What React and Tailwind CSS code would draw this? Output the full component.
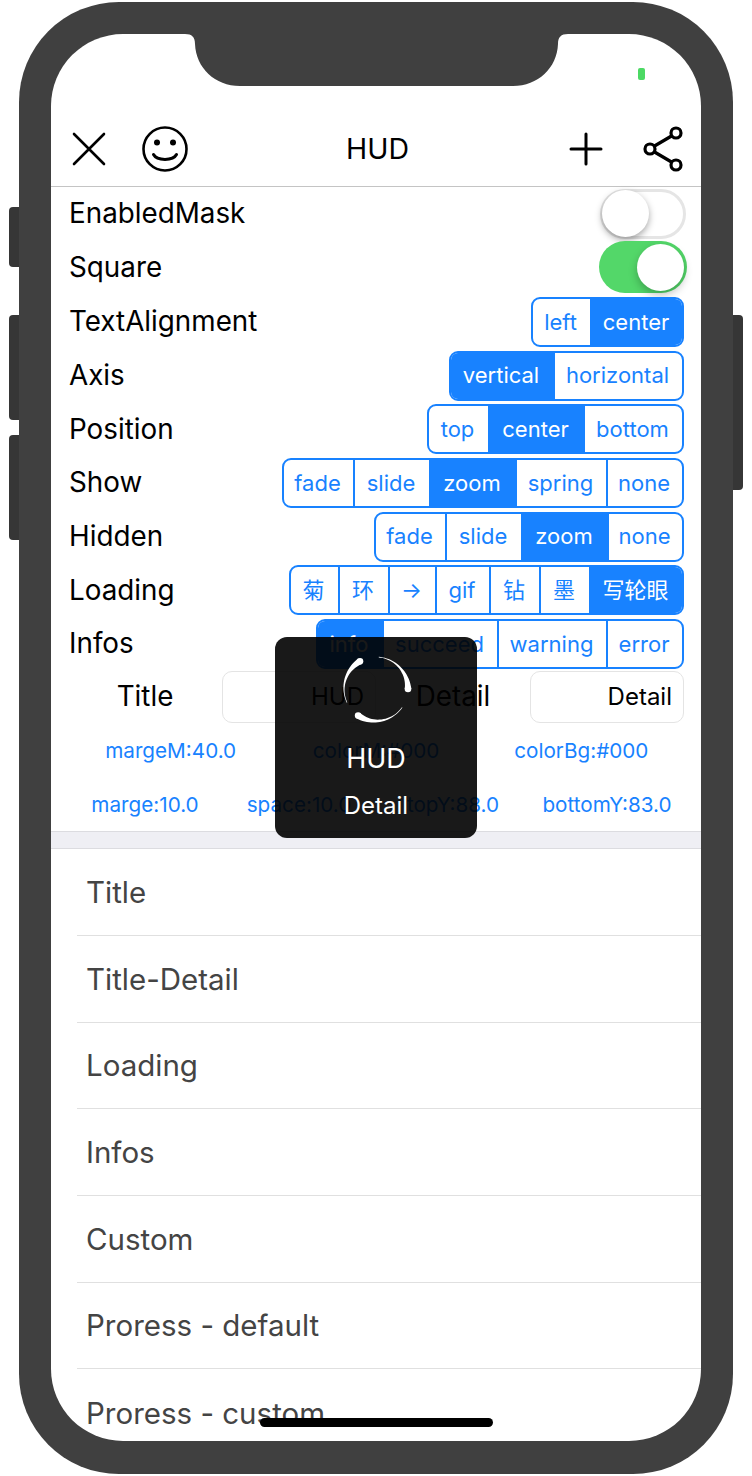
import React from "react";

const font = { fontFamily: "Inter, 'Noto Sans CJK SC', sans-serif" };

const segments = [
  {
    label: "TextAlignment",
    items: [
      ["left", "w-[57px]"],
      ["center", "w-[92px]", true],
    ],
  },
  {
    label: "Axis",
    items: [
      ["vertical", "w-[102px]", true],
      ["horizontal", "w-[129px]"],
    ],
  },
  {
    label: "Position",
    items: [
      ["top", "w-[59px]"],
      ["center", "w-[95px]", true],
      ["bottom", "w-[99px]"],
    ],
  },
  {
    label: "Show",
    items: [
      ["fade", "w-[69px]"],
      ["slide", "w-[76px]"],
      ["zoom", "w-[86px]", true],
      ["spring", "w-[91px]"],
      ["none", "w-[76px]"],
    ],
  },
  {
    label: "Hidden",
    items: [
      ["fade", "w-[69px]"],
      ["slide", "w-[76px]"],
      ["zoom", "w-[86px]", true],
      ["none", "w-[75px]"],
    ],
  },
  {
    label: "Loading",
    items: [
      ["菊", "w-[47px]"],
      ["环", "w-[50px]"],
      ["→", "w-[47px]"],
      ["gif", "w-[54px]"],
      ["钻", "w-[50px]"],
      ["墨", "w-[50px]"],
      ["写轮眼", "w-[93px]", true],
    ],
  },
  {
    label: "Infos",
    items: [
      ["info", "w-[64px]", true],
      ["succeed", "w-[115px]"],
      ["warning", "w-[109px]"],
      ["error", "w-[76px]"],
    ],
  },
];

const listItems = [
  "Title",
  "Title-Detail",
  "Loading",
  "Infos",
  "Custom",
  "Proress - default",
  "Proress - custom",
];

const Notch = () => (
  <svg width="383" height="52" viewBox="0 0 383 52" className="block">
    <path
      d="M0 0H383C376 0 373 3 373 10C372 34 353 52 328 52H55C30 52 11 34 10 10C10 3 7 0 0 0Z"
      fill="#404040"
    />
  </svg>
);

const CloseIcon = () => (
  <svg width="34" height="34" viewBox="0 0 34 34" fill="none" stroke="#000" strokeWidth="2.6" strokeLinecap="round">
    <path d="M2 2L32 32M32 2L2 32" />
  </svg>
);

const SmileIcon = () => (
  <svg width="46" height="46" viewBox="0 0 46 46" fill="none" stroke="#000" strokeWidth="2.6" strokeLinecap="round">
    <circle cx="23" cy="23" r="21.5" />
    <path d="M11.5 28.5C15 35 31 35 34.5 28.5" strokeWidth="3" />
    <circle cx="15" cy="16.5" r="3" fill="#000" stroke="none" />
    <circle cx="31" cy="16.5" r="3" fill="#000" stroke="none" />
  </svg>
);

const PlusIcon = () => (
  <svg width="34" height="34" viewBox="0 0 34 34" fill="none" stroke="#000" strokeWidth="3" strokeLinecap="round">
    <path d="M17 2V32M2 17H32" />
  </svg>
);

const ShareIcon = () => (
  <svg width="40" height="46" viewBox="0 0 40 46" fill="none" stroke="#000" strokeWidth="3.2">
    <circle cx="7" cy="23" r="5" />
    <circle cx="33" cy="7" r="5" />
    <circle cx="33" cy="39" r="5" />
    <path d="M11.5 20L28.5 10M11.5 26L28.5 36" />
  </svg>
);

// tapered arc: thin at the tail, thick at the head, angles clockwise from 12 o'clock
const arcPath = (from, to) => {
  const c = 38;
  const r = 32;
  const outer = [];
  const inner = [];
  for (let i = 0; i <= 24; i++) {
    const t = i / 24;
    const a = ((from + (to - from) * t) * Math.PI) / 180;
    const w = 0.3 + t * t * 3;
    const x = Math.sin(a);
    const y = -Math.cos(a);
    outer.push(`${(c + x * (r + w)).toFixed(2)} ${(c + y * (r + w)).toFixed(2)}`);
    inner.unshift(`${(c + x * (r - w)).toFixed(2)} ${(c + y * (r - w)).toFixed(2)}`);
  }
  return `M${outer.join("L")}L${inner.join("L")}Z`;
};

const headPoint = (angle) => {
  const a = (angle * Math.PI) / 180;
  return [38 + Math.sin(a) * 32, 38 - Math.cos(a) * 32];
};

const Spinner = () => (
  <svg width="76" height="76" viewBox="0 0 76 76" fill="#fff">
    {[
      [245, 330],
      [5, 90],
      [125, 214],
    ].map(([from, to]) => {
      const [cx, cy] = headPoint(to);
      return (
        <g key={from}>
          <path d={arcPath(from, to)} />
          <circle cx={cx} cy={cy} r="3.3" />
        </g>
      );
    })}
  </svg>
);

const Switch = ({ on }) =>
  on ? (
    <div className="-mr-[3px] flex h-[52px] w-[88px] items-center justify-end rounded-full bg-[#53d769] pr-[3px]">
      <div className="h-[47px] w-[47px] rounded-full bg-white shadow-[0_4px_8px_rgba(0,0,0,0.25)]" />
    </div>
  ) : (
    <div className="-mr-[2px] flex h-[50px] w-[86px] items-center rounded-full border-[3px] border-[#e5e5e5] bg-white">
      <div className="-ml-[1px] h-[47px] w-[47px] rounded-full bg-white shadow-[0_3px_7px_rgba(0,0,0,0.35)]" />
    </div>
  );

const Segmented = ({ items }) => (
  <div className="flex h-[50px] overflow-hidden rounded-[9px] border-2 border-[#1882ff]">
    {items.map(([text, width, active], i) => (
      <div
        key={text + i}
        className={`flex shrink-0 items-center justify-center pr-[2px] text-[22px] ${width} ${
          i > 0 ? "border-l-2 border-[#1882ff]" : ""
        } ${active ? "bg-[#1882ff] text-white" : "text-[#1882ff]"}`}
      >
        {text}
      </div>
    ))}
  </div>
);

const Row = ({ label, children, className = "" }) => (
  <div className={`flex h-[53.67px] items-center justify-between pl-[18px] pr-[17px] ${className}`}>
    <span className="text-[27.8px] text-black">{label}</span>
    {children}
  </div>
);

const TextInput = ({ value }) => (
  <div className="flex h-[52px] items-center justify-end rounded-[10px] border border-[#e4e4e4] pr-[11px] pt-[1px] text-[24px] text-black">
    {value}
  </div>
);

const Blue = ({ children }) => (
  <span className="text-center text-[20.7px] text-[#1882ff]">{children}</span>
);

const App = () => {
  return (
    <div className="relative h-[1476px] w-[752px] bg-white pl-[19px] pt-[2px]" style={font}>
      {/* side buttons */}
      <div className="absolute left-[9px] top-[207px] h-[60px] w-[17px] rounded-l-[4px] bg-[#363636]" />
      <div className="absolute left-[9px] top-[315px] h-[105px] w-[17px] rounded-l-[4px] bg-[#363636]" />
      <div className="absolute left-[9px] top-[435px] h-[105px] w-[17px] rounded-l-[4px] bg-[#363636]" />
      <div className="absolute left-[726px] top-[315px] h-[175px] w-[17px] rounded-r-[4px] bg-[#363636]" />

      <div className="relative h-[1472px] w-[714px] rounded-[100px] bg-[#404040] px-[32px] pb-[33px] pt-[32px]">
        <div className="relative flex h-full flex-col overflow-hidden rounded-[72px] bg-white">
          {/* status area */}
          <div className="relative flex h-[81px] shrink-0 justify-center">
            <Notch />
            <div className="absolute left-[587px] top-[34px] h-[12px] w-[7px] rounded-[2px] bg-[#4cd964]" />
          </div>

          {/* nav bar */}
          <div className="grid h-[72px] shrink-0 grid-cols-3 items-center border-b border-[#c4c4c4] pb-[4px] pl-[21px] pr-[18px]">
            <div className="flex items-center gap-[36px]">
              <CloseIcon />
              <SmileIcon />
            </div>
            <div className="pt-[2px] text-center text-[28.5px] text-black">HUD</div>
            <div className="flex items-center justify-end gap-[40px]">
              <PlusIcon />
              <ShareIcon />
            </div>
          </div>

          {/* settings */}
          <div className="shrink-0">
            <Row label="EnabledMask">
              <Switch />
            </Row>
            <Row label="Square">
              <Switch on />
            </Row>
            {segments.map((s) => (
              <Row key={s.label} label={s.label} className="pt-[2px]">
                <Segmented items={s.items} />
              </Row>
            ))}
            <div className="grid h-[53.67px] grid-cols-4 items-center pl-[17px] pr-[17px]">
              <span className="pt-[1px] text-center text-[27.8px] text-black">Title</span>
              <TextInput value="HUD" />
              <span className="pt-[1px] text-center text-[27.8px] text-black">Detail</span>
              <TextInput value="Detail" />
            </div>
            <div className="grid h-[53.67px] grid-cols-3 items-center pl-[17px] pr-[17px]">
              <Blue>margeM:40.0</Blue>
              <Blue>colorM:#000</Blue>
              <Blue>colorBg:#000</Blue>
            </div>
            <div className="grid h-[53.67px] grid-cols-4 items-center pl-[17px] pr-[17px]">
              <Blue>marge:10.0</Blue>
              <Blue>space:10.0</Blue>
              <Blue>topY:88.0</Blue>
              <Blue>bottomY:83.0</Blue>
            </div>
          </div>

          {/* list */}
          <div className="h-[18.5px] shrink-0 border-y border-[#dcdce0] bg-[#efeff4]" />
          <div className="min-h-0 flex-1">
            {listItems.map((item, i) => (
              <div
                key={item}
                className={`ml-[26px] flex h-[86.67px] items-center pl-[9px] text-[29.5px] text-[#444444] ${
                  i < listItems.length - 1 ? "border-b border-[#e0e0e0]" : ""
                }`}
              >
                {item}
              </div>
            ))}
          </div>

          {/* home indicator */}
          <div className="absolute bottom-[14px] left-[209px] h-[9px] w-[233px] rounded-full bg-black" />

          {/* HUD overlay */}
          <div className="absolute left-[224px] top-[603px] flex h-[201px] w-[202px] flex-col items-center rounded-[12px] bg-black/90 pt-[14px] text-white">
            <Spinner />
            <span className="mt-[15px] text-[27px] leading-[34px]">HUD</span>
            <span className="mt-[15px] text-[24px] leading-[30px]">Detail</span>
          </div>
        </div>
      </div>
    </div>
  );
};

export default App;
